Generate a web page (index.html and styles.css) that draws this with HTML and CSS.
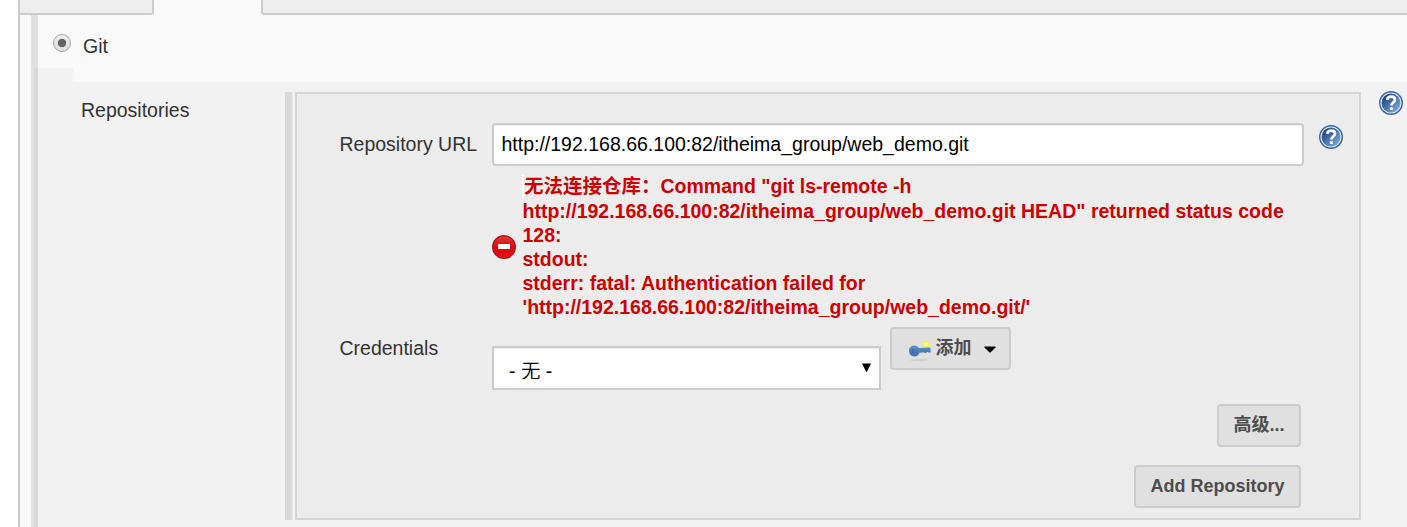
FILE: index.html
```
<!DOCTYPE html>
<html lang="zh-CN">
<head>
<meta charset="utf-8">
<title>Git</title>
<link rel="stylesheet" href="styles.css">
</head>
<body>
<svg class="defs" aria-hidden="true">
  <defs>
    <linearGradient id="blue" x1="0" y1="0" x2="1" y2="1">
      <stop offset="0.15" stop-color="#1f4585"/>
      <stop offset="0.9" stop-color="#7fa8d8"/>
    </linearGradient>
    <linearGradient id="red" x1="0" y1="0" x2="0" y2="1">
      <stop offset="0" stop-color="#e23a3a"/>
      <stop offset="0.5" stop-color="#d90a10"/>
      <stop offset="1" stop-color="#e01018"/>
    </linearGradient>
    <linearGradient id="key" x1="0" y1="0" x2="0" y2="1">
      <stop offset="0" stop-color="#5d92cc"/>
      <stop offset="1" stop-color="#3d6ca8"/>
    </linearGradient>
    <symbol id="help" viewBox="0 0 24 24">
      <circle cx="12" cy="12" r="11.3" fill="#dce7f4" stroke="#3c67a3" stroke-width="1.4"/>
      <circle cx="12" cy="12" r="9.4" fill="url(#blue)"/>
      <path d="M8.200 8.900C8.400 6.500 10 5.600 12.200 5.600c2.200 0 3.800 1.100 3.800 3.100 0 2.800-3.600 2.800-3.600 5.800" fill="none" stroke="#fff" stroke-width="2.700"/>
      <rect x="10.900" y="16.200" width="3" height="2.900" rx="0.600" fill="#fff"/>
    </symbol>
  </defs>
</svg>
<div class="page">
  <div class="tabs">
    <div class="tab tab-left"></div>
    <div class="tab tab-right"></div>
  </div>
  <div class="content">
    <div class="rail"><div class="rail-inner"></div></div>
    <div class="main">
      <label class="scm"><span class="radio"></span><span class="scm-name">Git</span></label>
      <div class="notch"></div>
      <div class="section">
        <div class="section-label">Repositories</div>
        <div class="handle"></div>
        <div class="panel">
          <div class="row url-row">
            <div class="label">Repository URL</div>
            <div class="input">http://192.168.66.100:82/itheima_group/web_demo.git</div>
            <svg class="help"><use href="#help"/></svg>
          </div>
          <div class="error">
            <svg class="error-icon" viewBox="0 0 24 24">
              <circle cx="12" cy="12" r="12" fill="#b5161a"/>
              <circle cx="12" cy="12" r="10.5" fill="url(#red)"/>
              <rect x="6" y="9" width="12" height="5" rx="0.4" fill="#fff"/>
            </svg>
            <div class="error-text"><span class="first">无法连接仓库：Command "git ls-remote -h</span><br>http://192.168.66.100:82/itheima_group/web_demo.git HEAD" returned status code<br>128:<br>stdout:<br>stderr: fatal: Authentication failed for<br>'http://192.168.66.100:82/itheima_group/web_demo.git/'</div>
          </div>
          <div class="row cred-row">
            <div class="label">Credentials</div>
            <div class="select"><span class="select-value">- 无 -</span><svg class="select-arrow" viewBox="0 0 9 10"><path d="M0 0.5h9L4.5 9.5z"/></svg></div>
            <div class="button add">
              <svg class="key" viewBox="0 0 24 24">
                <ellipse cx="11" cy="22" rx="9" ry="1" fill="#cfcfcf"/>
                <circle cx="18" cy="6.5" r="3.8" fill="#f5ee62"/>
                <circle cx="18" cy="6.5" r="1.7" fill="#fff9a0"/>
                <path d="M1 12.8c0-3.200 2.300-5.300 5.200-5.300 2.300 0 3.600 1.300 4.800 2.600l10-.6c1 0 1.600.6 1.600 1.600v3.400h-2.300v-.6l-1.800.2v.9h-2.300v-.8l-4.500.5C10.700 16.700 9 18.500 6.300 18.500 3.200 18.500 1 16 1 12.800z" fill="url(#key)"/>
                <ellipse cx="4.800" cy="13" rx="1.600" ry="2.200" fill="#456fa8"/>
              </svg>
              <span>添加</span>
              <svg class="caret" viewBox="0 0 12 7"><path d="M0.500 0.500h11v1L6.500 6.500h-1L0.500 1.500z"/></svg>
            </div>
          </div>
          <div class="actions">
            <div class="button">高级...</div>
            <div class="button">Add Repository</div>
          </div>
        </div>
        <svg class="help outer"><use href="#help"/></svg>
      </div>
    </div>
  </div>
</div>
</body>
</html>
```
FILE: styles.css
```
* { box-sizing: border-box; }
body {
  margin: 0;
  background: #fff;
  color: #333;
  font: 19.5px/24px "Liberation Sans", "Noto Sans CJK SC", sans-serif;
}
svg { display: block; flex: none; }
.defs { position: absolute; width: 0; height: 0; }
.page {
  height: 527px;
  margin-left: 18px;
  border-left: 2px solid #ccc;
  background: #f9f9f9;
  display: flex;
  flex-direction: column;
  overflow: hidden;
}
.tabs { display: flex; justify-content: space-between; height: 15px; flex: none; }
.tab { background: #eee; border-bottom: 2px solid #ccc; }
.tab-left { width: 134px; border-right: 2px solid #ccc; border-bottom-right-radius: 3px; }
.tab-right { width: 1146px; border-left: 2px solid #ccc; border-bottom-left-radius: 3px; }
.content { display: flex; flex: 1; padding-left: 11px; }
.rail { width: 7px; background: #e0e0e0; padding: 53px 0 0 3px; flex: none; }
.rail-inner { height: 100%; background: #d9d9d9; }
.main { flex: 1; display: flex; flex-direction: column; }
.scm { height: 53px; display: flex; align-items: flex-start; padding: 19px 0 0 15px; flex: none; }
.radio {
  width: 18px;
  height: 18px;
  border: 1px solid #a6a6a6;
  border-radius: 50%;
  background: radial-gradient(circle, #636363 0 3.8px, transparent 4.6px), linear-gradient(#eee, #ddd);
}
.scm-name { margin-left: 12px; }
.notch { width: 35px; height: 14px; background: #f2f2f2; flex: none; }
.section { flex: 1; display: flex; align-items: flex-start; background: #f2f2f2; padding: 10px 0 0 43px; }
.section-label { width: 204px; padding-top: 6px; flex: none; }
.handle { width: 8px; height: 428px; background: #d9d9d9; border-right: 1px solid #e9e9e9; flex: none; }
.panel {
  width: 1066px;
  height: 428px;
  margin-left: 2px;
  padding: 29px 0 0 42px;
  border: 2px solid #d5d5d5;
  background: #ececec;
  flex: none;
}
.row { display: flex; align-items: flex-start; }
.label { width: 153px; padding-left: 0.5px; flex: none; }
.url-row .label { padding-top: 9px; }
.input {
  width: 812px;
  height: 43px;
  padding: 7px 7.5px 0;
  border: 2px solid #ccc;
  border-radius: 4px;
  background: #fff;
  box-shadow: inset 0 1px 1px rgba(0, 0, 0, .08);
  color: #000;
}
.help { width: 24px; height: 24px; margin: 2px 0 0 15px; }
.help.outer { margin: -1px 0 0 18px; }
.error { display: flex; align-items: center; height: 144px; margin: 9px 0 0 153px; }
.error-icon { width: 24px; height: 24px; }
.error-text { margin-left: 6.5px; color: #c00; font-weight: bold; white-space: nowrap; }
.first { display: inline-block; height: 24px; line-height: 22px; vertical-align: top; margin-left: -0.5px; border-left: 2px solid #fff; }
.cred-row { margin-top: 8px; }
.cred-row .label { padding-top: 9px; }
.select {
  display: flex;
  align-items: flex-start;
  justify-content: space-between;
  width: 389px;
  height: 44px;
  margin-top: 19px;
  padding: 0 8px 0 15px;
  border: 2px solid #ccc;
  background: #fff;
  box-shadow: inset 0 1px 1px rgba(0, 0, 0, .08);
  color: #000;
}
.select-value { height: 20px; margin-top: 11px; overflow: hidden; font-weight: 350; }
.select-arrow { width: 9px; height: 10px; margin-top: 15px; }
.button {
  display: flex;
  align-items: center;
  height: 43px;
  padding: 0 14.500px 2px;
  border: 2px solid #ccc;
  border-radius: 4px;
  background: #e0e0e0;
  color: #4d4d4d;
  font-size: 18px;
  font-weight: bold;
  white-space: nowrap;
}
.add { width: 121px; margin-left: 9px; }
.key { width: 24px; height: 24px; margin: 4px 4px 0 1px; }
.caret { width: 12px; height: 7px; margin: 3px 0 0 12px; }
.actions { display: flex; flex-direction: column; align-items: flex-end; gap: 18px; margin: 14px 58px 0 0; }
```
